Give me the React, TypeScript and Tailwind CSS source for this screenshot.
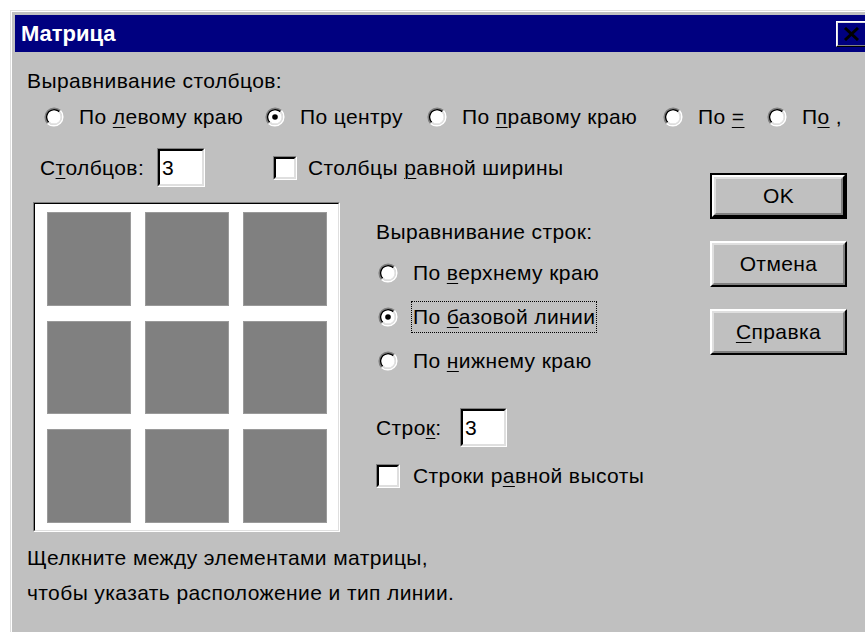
import type { ReactNode } from 'react';

const FONT = "font-['Liberation_Sans','Noto_Sans',sans-serif]";

// Label with an underlined access key, e.g. По л̲евому краю
function Hotkey({ pre = '', k, post = '' }: { pre?: string; k: string; post?: string }) {
  return (
    <span className="whitespace-pre">
      {pre}
      <span className="underline decoration-1 underline-offset-[3px]">{k}</span>
      {post}
    </span>
  );
}

function RadioDot({ checked = false }: { checked?: boolean }) {
  return (
    <svg width="20" height="20" viewBox="0 0 20 20" className="shrink-0">
      <path d="M3.64 16.36 A9 9 0 0 1 16.36 3.64" fill="none" stroke="#808080" strokeWidth="1.6" />
      <path d="M16.36 3.64 A9 9 0 0 1 3.64 16.36" fill="none" stroke="#ffffff" strokeWidth="1.6" />
      <path d="M4.7 15.3 A7.5 7.5 0 0 1 15.3 4.7" fill="none" stroke="#000000" strokeWidth="1.6" />
      <path d="M15.3 4.7 A7.5 7.5 0 0 1 4.7 15.3" fill="none" stroke="#dfdfdf" strokeWidth="1.6" />
      <circle cx="10" cy="10" r="6.6" fill="#ffffff" />
      {checked && <circle cx="10" cy="10" r="2.8" fill="#000000" />}
    </svg>
  );
}

function Radio({
  checked,
  focused,
  children,
  className = '',
}: {
  checked?: boolean;
  focused?: boolean;
  children: ReactNode;
  className?: string;
}) {
  return (
    <div className={`flex items-center ${className}`}>
      <RadioDot checked={checked} />
      <span
        className={`ml-[13px] flex h-[32px] items-center border px-[1px] ${
          focused ? 'border-dotted border-black' : 'border-transparent'
        }`}
      >
        {children}
      </span>
    </div>
  );
}

function CheckBox() {
  return (
    <div className="h-[24px] w-[24px] shrink-0 border border-b-white border-l-[#808080] border-r-white border-t-[#808080]">
      <div className="h-full w-full border-2 border-b-[#dfdfdf] border-l-black border-r-[#dfdfdf] border-t-black bg-white" />
    </div>
  );
}

function Field({ value, className = '' }: { value: string; className?: string }) {
  return (
    <div
      className={`h-[39px] shrink-0 border border-b-white border-l-[#808080] border-r-white border-t-[#808080] ${className}`}
    >
      <div className="flex h-full w-full items-center border-2 border-b-[#dfdfdf] border-l-black border-r-[#dfdfdf] border-t-black bg-white pl-[2px]">
        {value}
      </div>
    </div>
  );
}

function Button({ children, isDefault = false }: { children: ReactNode; isDefault?: boolean }) {
  const face = (
    <div className="h-full w-full border-2 border-b-black border-l-white border-r-black border-t-white">
      <div className="flex h-full w-full items-center justify-center border-2 border-b-[#808080] border-l-[#dfdfdf] border-r-[#808080] border-t-[#dfdfdf]">
        {children}
      </div>
    </div>
  );
  return (
    <div className={`h-[46px] w-[137px] ${isDefault ? 'border-2 border-black' : ''}`}>{face}</div>
  );
}

function MatrixPreview() {
  const cells = Array.from({ length: 9 });
  return (
    <div className="ml-[6px] mt-[15px] h-[330px] w-[307px] shrink-0 border border-b-white border-l-[#808080] border-r-white border-t-[#808080]">
      <div className="h-full w-full border border-b-[#dfdfdf] border-l-black border-r-[#dfdfdf] border-t-black bg-white pl-[12px] pt-[8px]">
        <div className="grid grid-cols-[84px_84px_84px] grid-rows-[94px_93px_94px] gap-x-[14px] gap-y-[15px]">
          {cells.map((_, i) => (
            <div key={i} className="border border-[#9a9a9a] bg-[#808080]" />
          ))}
        </div>
      </div>
    </div>
  );
}

export default function App() {
  return (
    <div
      className={`h-[632px] w-[865px] overflow-hidden bg-white pl-[10px] pt-[10px] text-[21px] tracking-[0.4px] text-black ${FONT}`}
    >
      <div className="h-[640px] w-[867px] border-l border-t border-[#dfdfdf] bg-[#c0c0c0]">
        <div className="flex h-full flex-col border-l border-t border-white p-[3px]">
          {/* caption bar */}
          <div className="flex h-[37px] items-center justify-between bg-[#000080] pl-[6px] pr-[2px]">
            <span className="text-[22px] font-bold leading-none tracking-normal text-white">Матрица</span>
            <div className="h-[26px] w-[36px] border border-b-black border-l-white border-r-black border-t-white">
              <div className="flex h-full w-full items-center border border-b-[#808080] border-l-[#dfdfdf] border-r-[#808080] border-t-[#dfdfdf] pl-[5px]">
                <svg width="17" height="14" viewBox="0 0 17 14">
                  <path d="M2 1 L15 13 M15 1 L2 13" stroke="#000" strokeWidth="3" />
                </svg>
              </div>
            </div>
          </div>

          <div className="flex flex-col pl-[12px] pr-[27px] pt-[17px]">
            <div className="h-[24px] leading-[24px]">Выравнивание столбцов:</div>

            <div className="mt-[12px] flex h-[24px] items-center pl-[17px]">
              <Radio className="w-[221px]">
                <Hotkey pre="По " k="л" post="евому краю" />
              </Radio>
              <Radio checked className="w-[162px]">
                По центру
              </Radio>
              <Radio className="w-[236px]">
                <Hotkey pre="По " k="п" post="равому краю" />
              </Radio>
              <Radio className="w-[104px]">
                <Hotkey pre="По " k="=" />
              </Radio>
              <Radio>
                <Hotkey pre="П" k="о" post=" ," />
              </Radio>
            </div>

            <div className="mt-[19px] flex">
              <div className="flex flex-1 flex-col">
                <div className="flex h-[39px] items-center pl-[13px]">
                  <span className="w-[117px]">
                    <Hotkey pre="С" k="т" post="олбцов:" />
                  </span>
                  <Field value="3" className="w-[48px]" />
                  <div className="ml-[68px]">
                    <CheckBox />
                  </div>
                  <span className="ml-[11px]">
                    <Hotkey pre="Столбцы " k="р" post="авной ширины" />
                  </span>
                </div>

                <div className="flex">
                  <MatrixPreview />

                  <div className="ml-[36px] mt-[15px] flex flex-col">
                    <div className="mt-[18px] h-[24px] leading-[24px]">Выравнивание строк:</div>
                    <div className="mt-[7px] flex flex-col pl-[2px]">
                      <Radio className="h-[44px]">
                        <Hotkey pre="По " k="в" post="ерхнему краю" />
                      </Radio>
                      <Radio checked focused className="h-[44px]">
                        <Hotkey pre="По " k="б" post="азовой линии" />
                      </Radio>
                      <Radio className="h-[44px]">
                        <Hotkey pre="По " k="н" post="ижнему краю" />
                      </Radio>
                    </div>
                    <div className="mt-[25px] flex h-[39px] items-center">
                      <span className="w-[84px]">
                        <Hotkey pre="Стро" k="к" post=":" />
                      </span>
                      <Field value="3" className="w-[47px]" />
                    </div>
                    <div className="mt-[16px] flex h-[25px] items-center">
                      <CheckBox />
                      <span className="ml-[13px]">
                        <Hotkey pre="Строки р" k="а" post="вной высоты" />
                      </span>
                    </div>
                  </div>
                </div>
              </div>

              <div className="flex w-[137px] flex-col gap-[22px] pt-[25px]">
                <Button isDefault>OK</Button>
                <Button>Отмена</Button>
                <Button>
                  <Hotkey k="С" post="правка" />
                </Button>
              </div>
            </div>

            <div className="mt-[8px] leading-[35px]">
              <div>Щелкните между элементами матрицы,</div>
              <div>чтобы указать расположение и тип линии.</div>
            </div>
          </div>
        </div>
      </div>
    </div>
  );
}
